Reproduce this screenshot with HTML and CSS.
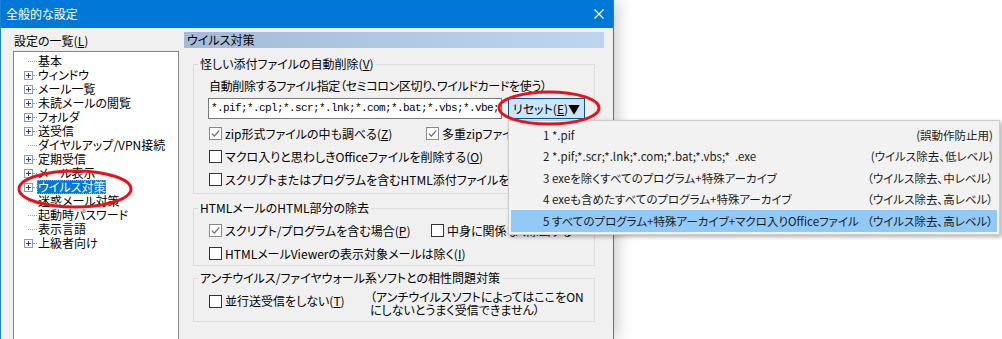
FILE: index.html
```html
<!DOCTYPE html>
<html lang="ja">
<head>
<meta charset="utf-8">
<title>全般的な設定</title>
<link rel="stylesheet" href="styles.css">
</head>
<body>
<div class="window">
  <div class="titlebar">
    <span class="title">全般的な設定</span>
    <svg class="close" width="10" height="10" viewBox="0 0 10 10"><path d="M0.5 0.5L9.5 9.5M9.5 0.5L0.5 9.5" stroke="#fff" stroke-width="1.1" fill="none"/></svg>
  </div>
  <div class="client">
    <div class="leftcol">
      <div class="list-label">設定の一覧(<u>L</u>)</div>
      <div class="tree">
        <div class="node leaf"><span class="dots"></span><span class="text">基本</span></div>
        <div class="node"><svg class="exp" viewBox="0 0 9 9"><rect x="0.5" y="0.5" width="8" height="8" fill="#fff" stroke="#8b9bb3"/><path d="M2 4.5h5M4.5 2v5" stroke="#1f3f86"/></svg><span class="dots"></span><span class="text">ウィンドウ</span></div>
        <div class="node"><svg class="exp" viewBox="0 0 9 9"><rect x="0.5" y="0.5" width="8" height="8" fill="#fff" stroke="#8b9bb3"/><path d="M2 4.5h5M4.5 2v5" stroke="#1f3f86"/></svg><span class="dots"></span><span class="text">メール一覧</span></div>
        <div class="node"><svg class="exp" viewBox="0 0 9 9"><rect x="0.5" y="0.5" width="8" height="8" fill="#fff" stroke="#8b9bb3"/><path d="M2 4.5h5M4.5 2v5" stroke="#1f3f86"/></svg><span class="dots"></span><span class="text">未読メールの閲覧</span></div>
        <div class="node"><svg class="exp" viewBox="0 0 9 9"><rect x="0.5" y="0.5" width="8" height="8" fill="#fff" stroke="#8b9bb3"/><path d="M2 4.5h5M4.5 2v5" stroke="#1f3f86"/></svg><span class="dots"></span><span class="text">フォルダ</span></div>
        <div class="node"><svg class="exp" viewBox="0 0 9 9"><rect x="0.5" y="0.5" width="8" height="8" fill="#fff" stroke="#8b9bb3"/><path d="M2 4.5h5M4.5 2v5" stroke="#1f3f86"/></svg><span class="dots"></span><span class="text">送受信</span></div>
        <div class="node leaf"><span class="dots"></span><span class="text">ダイヤルアップ/VPN接続</span></div>
        <div class="node"><svg class="exp" viewBox="0 0 9 9"><rect x="0.5" y="0.5" width="8" height="8" fill="#fff" stroke="#8b9bb3"/><path d="M2 4.5h5M4.5 2v5" stroke="#1f3f86"/></svg><span class="dots"></span><span class="text">定期受信</span></div>
        <div class="node"><svg class="exp" viewBox="0 0 9 9"><rect x="0.5" y="0.5" width="8" height="8" fill="#fff" stroke="#8b9bb3"/><path d="M2 4.5h5M4.5 2v5" stroke="#1f3f86"/></svg><span class="dots"></span><span class="text">メール表示</span></div>
        <div class="node"><svg class="exp" viewBox="0 0 9 9"><rect x="0.5" y="0.5" width="8" height="8" fill="#fff" stroke="#8b9bb3"/><path d="M2 4.5h5M4.5 2v5" stroke="#1f3f86"/></svg><span class="dots"></span><span class="text selected">ウイルス対策</span></div>
        <div class="node leaf"><span class="dots"></span><span class="text">迷惑メール対策</span></div>
        <div class="node leaf"><span class="dots"></span><span class="text">起動時パスワード</span></div>
        <div class="node leaf"><span class="dots"></span><span class="text">表示言語</span></div>
        <div class="node"><svg class="exp" viewBox="0 0 9 9"><rect x="0.5" y="0.5" width="8" height="8" fill="#fff" stroke="#8b9bb3"/><path d="M2 4.5h5M4.5 2v5" stroke="#1f3f86"/></svg><span class="dots"></span><span class="text">上級者向け</span></div>
      </div>
    </div>
    <div class="panel">
      <div class="panel-head">ウイルス対策</div>
      <div class="groups">
        <fieldset class="group g1">
          <legend>怪しい添付ファイルの自動削除(<u>V</u>)</legend>
          <div class="gbody">
            <div class="field-label">自動削除するファイル指定（セミコロン区切り、ワイルドカードを使う）</div>
            <div class="field-row">
              <div class="path">*.pif;*.cpl;*.scr;*.lnk;*.com;*.bat;*.vbs;*.vbe;</div>
              <div class="reset">リセット(<u>E</u>)▼</div>
            </div>
            <div class="rows">
              <div class="row">
                <label class="chk w1"><span class="cb on"><svg viewBox="0 0 11 11"><path d="M1.8 5.6L4.3 8.1L9.2 2.6" stroke="#6a6a6a" stroke-width="1.3" fill="none"/></svg></span><span>zip形式ファイルの中も調べる(<u>Z</u>)</span></label>
                <label class="chk"><span class="cb on"><svg viewBox="0 0 11 11"><path d="M1.8 5.6L4.3 8.1L9.2 2.6" stroke="#6a6a6a" stroke-width="1.3" fill="none"/></svg></span><span>多重zipファイルも調べる</span></label>
              </div>
              <div class="row">
                <label class="chk"><span class="cb"></span><span>マクロ入りと思わしきOfficeファイルを削除する(<u>O</u>)</span></label>
              </div>
              <div class="row">
                <label class="chk"><span class="cb"></span><span>スクリプトまたはプログラムを含むHTML添付ファイルを削除する</span></label>
              </div>
            </div>
          </div>
        </fieldset>
        <fieldset class="group g2">
          <legend>HTMLメールのHTML部分の除去</legend>
          <div class="gbody">
            <div class="row">
              <label class="chk w2"><span class="cb on"><svg viewBox="0 0 11 11"><path d="M1.8 5.6L4.3 8.1L9.2 2.6" stroke="#6a6a6a" stroke-width="1.3" fill="none"/></svg></span><span>スクリプト/プログラムを含む場合(<u>P</u>)</span></label>
              <label class="chk"><span class="cb"></span><span>中身に関係なく除去する</span></label>
            </div>
            <div class="row">
              <label class="chk"><span class="cb"></span><span>HTMLメールViewerの表示対象メールは除く(<u>I</u>)</span></label>
            </div>
          </div>
        </fieldset>
        <fieldset class="group g3">
          <legend>アンチウイルス/ファイヤウォール系ソフトとの相性問題対策</legend>
          <div class="gbody">
            <div class="row3">
              <label class="chk w3"><span class="cb"></span><span>並行送受信をしない(<u>T</u>)</span></label>
              <div class="note">（アンチウイルスソフトによってはここをON<br>にしないとうまく受信できません）</div>
            </div>
          </div>
        </fieldset>
      </div>
    </div>
  </div>
</div>

<div class="menu">
  <div class="mi"><span>1 *.pif</span><span>(誤動作防止用)</span></div>
  <div class="mi"><span>2 *.pif;*.scr;*.lnk;*.com;*.bat;*.vbs;*  .exe</span><span>(ウイルス除去、低レベル)</span></div>
  <div class="mi"><span>3 exeを除くすべてのプログラム+特殊アーカイブ</span><span>（ウイルス除去、中レベル）</span></div>
  <div class="mi"><span>4 exeも含めたすべてのプログラム+特殊アーカイブ</span><span>（ウイルス除去、高レベル）</span></div>
  <div class="mi hl"><span>5 すべてのプログラム+特殊アーカイブ+マクロ入りOfficeファイル</span><span>（ウイルス除去、高レベル）</span></div>
</div>

<svg class="marks" width="1002" height="339" viewBox="0 0 1002 339">
  <ellipse cx="75" cy="189" rx="56" ry="18" fill="none" stroke="#e5141c" stroke-width="3"/>
  <ellipse cx="549" cy="108" rx="50" ry="16" fill="none" stroke="#e5141c" stroke-width="3"/>
</svg>
</body>
</html>
```

FILE: styles.css
```css
* { box-sizing: border-box; }

html, body {
  margin: 0;
  padding: 0;
  overflow: hidden;
}

body {
  position: relative;
  width: 1002px;
  height: 339px;
  background: #ffffff;
  font-family: "Noto Sans CJK JP", "Noto Sans", sans-serif;
  font-size: 12px;
  color: #000;
  font-feature-settings: "palt";
}

u { text-decoration: underline; text-underline-offset: 1px; }

.window {
  width: 614px;
  height: 339px;
  overflow: hidden;
  border-left: 1px solid #1883d7;
  border-right: 1px solid #1883d7;
  background: #f0f0f0;
  box-shadow: 3px 0 16px rgba(0, 0, 0, 0.22);
  display: flex;
  flex-direction: column;
}

.titlebar {
  flex: none;
  height: 28px;
  background: #0078d7;
  color: #fff;
  display: flex;
  align-items: center;
  justify-content: space-between;
  padding: 0 9px 0 5px;
}

.title { line-height: 16px; }
.close { display: block; width: 10px; height: 10px; }

.client {
  flex: 1;
  min-height: 0;
  display: flex;
  padding-left: 12px;
  gap: 5px;
}

/* left column */
.leftcol {
  width: 166px;
  display: flex;
  flex-direction: column;
  padding-top: 5px;
  margin-bottom: -20px;
}

.list-label {
  line-height: 16px;
  margin: 0 0 2px 1px;
}

.tree {
  flex: 1;
  background: #fff;
  border: 1px solid #828790;
  padding-top: 2px;
}

.node {
  height: 14px;
  display: flex;
  align-items: center;
  padding-left: 10px;
  white-space: nowrap;
}

.exp { display: block; flex: none; width: 9px; height: 9px; }

.dots {
  flex: none;
  width: 4px;
  height: 0;
  border-top: 1px dotted #a0a0a0;
}

.leaf .dots { margin-left: 4px; width: 9px; }

.text {
  line-height: 14px;
  padding: 0 1px;
}

.text.selected {
  background: #0078d7;
  color: #fff;
  outline: 1px dotted #d79a52;
  outline-offset: -1px;
}

/* right panel */
.panel {
  width: 420px;
  padding-top: 4px;
  display: flex;
  flex-direction: column;
}

.panel-head {
  height: 16px;
  line-height: 16px;
  padding-left: 3px;
  background: linear-gradient(to right, #a4bbd8, #bed5ef);
}

.groups {
  padding: 0 9px;
  display: flex;
  flex-direction: column;
}

fieldset.group {
  margin: 0;
  padding: 0;
  min-width: 0;
  border: 1px solid #dcdcdc;
}

fieldset.group legend {
  margin-left: 4px;
  padding: 0 2px;
  line-height: 16px;
}

.gbody { padding-left: 15px; }

fieldset.g1 { margin-top: 8px; }
.g1 .gbody { padding-top: 6px; padding-bottom: 2px; }

.field-label {
  line-height: 16px;
  white-space: nowrap;
  letter-spacing: -0.35px;
}

.field-row {
  display: flex;
  gap: 6px;
  margin-top: 4px;
  margin-left: -1px;
}

.path {
  width: 294px;
  height: 21px;
  background: #fff;
  border: 1px solid #7a7a7a;
  padding-left: 2px;
  font-family: "Liberation Mono", "DejaVu Sans Mono", monospace;
  font-size: 11px;
  letter-spacing: -0.6px;
  line-height: 19px;
  white-space: nowrap;
  overflow: hidden;
  font-feature-settings: normal;
}

.reset {
  width: 77px;
  height: 21px;
  background: #cce4f7;
  border: 1px solid #005499;
  display: flex;
  align-items: center;
  justify-content: center;
  line-height: 16px;
}

.rows { margin-top: 3px; }

.row {
  height: 23px;
  display: flex;
  align-items: center;
}

.chk {
  display: flex;
  align-items: center;
  gap: 3px;
  white-space: nowrap;
  line-height: 16px;
}

.w1 { width: 217px; flex: none; }
.w2 { width: 222px; flex: none; }
.w3 { width: 161px; flex: none; margin-top: 3px; }

.cb {
  flex: none;
  width: 13px;
  height: 13px;
  border: 1px solid #333;
  background: #fff;
}

.cb.on { border-color: #8a8a8a; }
.cb svg { display: block; width: 11px; height: 11px; }

fieldset.g2 { margin-top: 6px; }
.g2 .gbody { padding-top: 3px; }

fieldset.g3 { margin-top: 4px; }
.g3 .gbody { padding-top: 4px; padding-bottom: 5px; }

.row3 {
  display: flex;
  align-items: flex-start;
}

.note {
  line-height: 13px;
  white-space: nowrap;
}

/* dropdown menu */
.menu {
  position: absolute;
  left: 508px;
  top: 120px;
  width: 492px;
  background: #f2f2f2;
  border: 1px solid #cccccc;
  padding: 3px 2px 2px;
  box-shadow: 2px 2px 4px rgba(0, 0, 0, 0.3);
  z-index: 2;
  font-size: 11.5px;
}

.mi {
  height: 21.5px;
  display: flex;
  align-items: center;
  justify-content: space-between;
  padding: 0 4px 0 32px;
  white-space: pre;
  color: #1a1a1a;
}

.mi.hl { background: #91c9f7; }

/* annotation marks */
.marks {
  position: absolute;
  left: 0;
  top: 0;
  z-index: 3;
  pointer-events: none;
}
```
